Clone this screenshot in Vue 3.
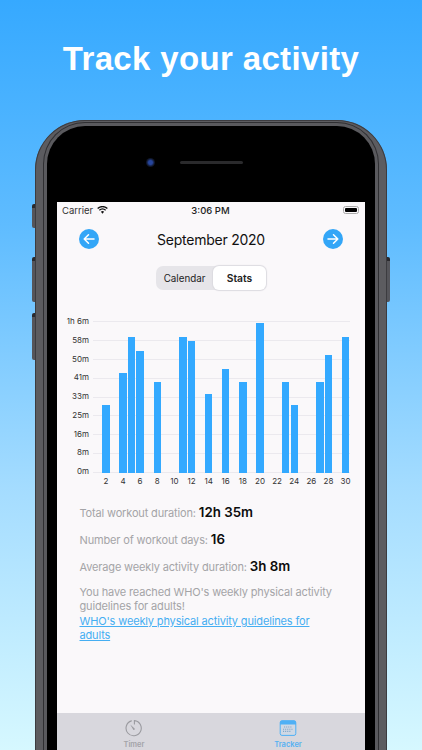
<script setup>
const days = [
  ['', 0], [2, 68], ['', 0], [4, 100], [5, 136, ''], [6, 122], ['', 0], [8, 91], ['', 0], [10, 0],
  [11, 136, ''], [12, 132], ['', 0], [14, 79.5], ['', 0], [16, 104.5], ['', 0], [18, 91], ['', 0], [20, 150],
  ['', 0], [22, 0], [23, 91, ''], [24, 68], ['', 0], [26, 0], [27, 91, ''], [28, 118], ['', 0], [30, 136]
].map(([d, h, hide], i) => ({ id: i, label: hide === '' ? '' : d, h }))
const ticks = ['1h 6m', '58m', '50m', '41m', '33m', '25m', '16m', '8m', '0m']
</script>

<template>
  <div class="page">
    <h1 class="headline">Track your activity</h1>
    <div class="phone">
      <span class="btn mute"></span>
      <span class="btn volup"></span>
      <span class="btn voldown"></span>
      <span class="btn power"></span>
      <div class="bezel">
        <div class="top">
          <span class="camera"></span>
          <span class="speaker"></span>
        </div>
        <div class="screen">
          <div class="status">
            <span class="carrier">Carrier
              <svg class="wifi" viewBox="0 0 16 12" width="11" height="8">
                <path d="M8 11.5 5.6 8.8a3.4 3.4 0 0 1 4.8 0Z" fill="#111"/>
                <path d="M3.9 7.1a6 6 0 0 1 8.2 0l1.3-1.4a8 8 0 0 0-10.8 0Z" fill="#111"/>
                <path d="M1.4 4.4a9.7 9.7 0 0 1 13.2 0L16 3A11.7 11.7 0 0 0 0 3Z" fill="#111"/>
              </svg>
            </span>
            <span class="time">3:06 PM</span>
            <span class="battery-slot"><span class="battery"><i></i></span></span>
          </div>

          <div class="month">
            <span class="round">
              <svg viewBox="0 0 20 20" width="20" height="20"><path d="M15 10H5.5M9.5 5.8 5.2 10l4.3 4.2" fill="none" stroke="#fff" stroke-width="1.5" stroke-linecap="round" stroke-linejoin="round"/></svg>
            </span>
            <span class="month-name">September 2020</span>
            <span class="round">
              <svg viewBox="0 0 20 20" width="20" height="20"><path d="M5 10h9.5M10.5 5.8l4.3 4.2-4.3 4.2" fill="none" stroke="#fff" stroke-width="1.5" stroke-linecap="round" stroke-linejoin="round"/></svg>
            </span>
          </div>

          <div class="segment">
            <span class="seg">Calendar</span>
            <span class="seg active">Stats</span>
          </div>

          <div class="chart">
            <div class="y-axis">
              <span v-for="t in ticks" :key="t">{{ t }}</span>
            </div>
            <div class="plot">
              <div class="grid-lines">
                <i v-for="t in ticks" :key="t"></i>
              </div>
              <div class="bars">
                <div v-for="d in days" :key="d.id" class="slot">
                  <span v-if="d.h" class="bar" :style="{ height: d.h + 'px' }"></span>
                </div>
              </div>
              <div class="x-axis">
                <span v-for="d in days" :key="d.id">{{ d.label }}</span>
              </div>
            </div>
          </div>

          <div class="stats">
            <p class="stat">Total workout duration: <b>12h 35m</b></p>
            <p class="stat">Number of workout days: <b>16</b></p>
            <p class="stat">Average weekly activity duration: <b>3h 8m</b></p>
            <p class="note">You have reached WHO's weekly physical activity guidelines for adults!</p>
            <a class="link">WHO's weekly physical activity guidelines for adults</a>
          </div>

          <div class="tabs">
            <div class="tab">
              <svg viewBox="0 0 18 18" width="18" height="18">
                <path d="M6.4 1.9a7.6 7.6 0 1 0 3-.3V5" fill="none" stroke="#9b9ba0" stroke-width="1.1" stroke-linecap="round"/>
                <path d="M5.2 5.4 9.6 9.6a.9.9 0 0 1-1.3 1.2Z" fill="#9b9ba0"/>
              </svg>
              <span>Timer</span>
            </div>
            <div class="tab on">
              <svg viewBox="0 0 18 18" width="18" height="18">
                <rect x="1.2" y="1.8" width="15.6" height="14.6" rx="1.8" fill="#cfd8e4" stroke="#4fb0f5"/>
                <path d="M1 3.4a2 2 0 0 1 2-2h12a2 2 0 0 1 2 2v2H1Z" fill="#4fb0f5"/>
                <path d="M5 8h8M4 10.2h10M4 12.4h8" stroke="#7fa6c8" stroke-width="1.1" stroke-dasharray="1.1 1"/>
              </svg>
              <span>Tracker</span>
            </div>
          </div>
        </div>
      </div>
    </div>
  </div>
</template>

<style scoped>
.page {
  width: 422px;
  height: 750px;
  overflow: hidden;
  display: flex;
  flex-direction: column;
  align-items: center;
  background: linear-gradient(180deg, #36a9ff 0%, #5fbcff 30%, #a4dcff 65%, #d6f8ff 100%);
  font-family: Inter, "Liberation Sans", sans-serif;
}
.headline {
  margin: 37px 0 0;
  height: 44px;
  line-height: 44px;
  font-family: "Liberation Sans", Arial, sans-serif;
  font-size: 33px;
  font-weight: 700;
  color: #fff;
  letter-spacing: 0.35px;
  white-space: nowrap;
}
.phone {
  position: relative;
  margin-top: 39px;
  width: 352px;
  height: 700px;
  flex: none;
  box-sizing: border-box;
  padding: 6px 12px 0;
  border-radius: 50px 50px 0 0;
  background: #5c5c60;
  box-shadow: inset 0 0 0 1px #3c3c40;
}
.btn {
  position: absolute;
  width: 3px;
  background: #55555a;
  border-top: 4px solid #2a2a2e;
  box-sizing: border-box;
}
.mute { left: -3px; top: 84px; height: 24px; border-radius: 2px 0 0 2px; }
.volup { left: -3px; top: 137px; height: 45px; border-radius: 2px 0 0 2px; }
.voldown { left: -3px; top: 193px; height: 47px; border-radius: 2px 0 0 2px; }
.power { right: -3px; top: 137px; height: 45px; border-radius: 0 2px 2px 0; }
.bezel {
  height: 100%;
  box-sizing: border-box;
  padding: 0 10px;
  background: #000;
  border-radius: 38px 38px 0 0;
  display: flex;
  flex-direction: column;
  box-shadow: 0 0 0 3px #5a5a5e, 0 0 0 4px #2f2f32;
}
.top {
  height: 76px;
  flex: none;
  display: flex;
  align-items: center;
  justify-content: center;
  gap: 25px;
  padding: 0 34px 4px 0;
  box-sizing: border-box;
}
.camera {
  width: 9px;
  height: 9px;
  border-radius: 50%;
  background: radial-gradient(circle, #26459c 0 30%, #10182e 60%, #0a0a10 100%);
}
.speaker {
  width: 63px;
  height: 3px;
  border-radius: 2px;
  background: #2a2a2c;
}
.screen {
  width: 308px;
  height: 548px;
  flex: none;
  background: #faf8fa;
  display: flex;
  flex-direction: column;
}
.status {
  height: 16px;
  padding: 0 6px 0 5px;
  display: grid;
  grid-template-columns: 1fr auto 1fr;
  align-items: center;
  font-size: 9.5px;
  color: #222;
}
.carrier {
  display: flex;
  align-items: center;
  gap: 4px;
  color: #333;
}
.time { font-weight: 500; }
.battery-slot {
  display: flex;
  justify-content: flex-end;
}
.battery {
  width: 16px;
  height: 8px;
  box-sizing: border-box;
  padding: 1px;
  border: 1px solid #aaa;
  border-radius: 2.5px;
}
.battery i {
  display: block;
  height: 100%;
  background: #000;
  border-radius: 1px;
}
.month {
  height: 42px;
  padding: 0 22px;
  display: flex;
  align-items: center;
  justify-content: space-between;
}
.round {
  width: 20px;
  height: 20px;
  border-radius: 50%;
  background: #33a6f7;
  display: flex;
}
.month-name {
  font-size: 14px;
  letter-spacing: -0.25px;
  color: #111;
}
.segment {
  align-self: center;
  margin-top: 6px;
  width: 110px;
  height: 24px;
  box-sizing: border-box;
  background: #e6e5e9;
  border-radius: 7px;
  display: flex;
  font-size: 9.8px;
}
.seg {
  flex: 1;
  display: flex;
  align-items: center;
  justify-content: center;
  color: #222;
}
.seg.active {
  flex: 0 0 53px;
  font-size: 10.3px;
  font-weight: 600;
  background: #fff;
  border-radius: 6px;
  box-shadow: 0 0 1px 1px #dcdbe0;
  color: #222;
}
.chart {
  margin-top: 31px;
  display: flex;
  padding-left: 7px;
}
.y-axis {
  width: 25px;
  height: 163px;
  margin-top: -6px;
  display: flex;
  flex-direction: column;
  justify-content: space-between;
  align-items: flex-end;
  font-size: 8px;
  line-height: 13px;
  color: #333;
}
.plot {
  position: relative;
  margin-left: 4px;
  width: 257px;
}
.grid-lines {
  position: absolute;
  inset: 0 0 auto 0;
  height: 152px;
  display: flex;
  flex-direction: column;
  justify-content: space-between;
}
.grid-lines i {
  display: block;
  height: 1px;
  background: #ebe9ee;
}
.bars {
  position: relative;
  height: 152px;
  display: grid;
  grid-template-columns: repeat(30, 8.57px);
  align-items: end;
}
.slot {
  height: 100%;
  display: flex;
  align-items: flex-end;
  justify-content: center;
}
.bar {
  width: 7.4px;
  flex: none;
  background: #33a9ff;
}
.x-axis {
  display: grid;
  grid-template-columns: repeat(30, 8.57px);
  margin-top: 2px;
  font-size: 8px;
  line-height: 12px;
  color: #333;
}
.x-axis span {
  display: flex;
  justify-content: center;
  white-space: nowrap;
  width: 8.57px;
}
.stats {
  padding: 0 22.5px;
  margin-top: 14.5px;
  flex: 1;
  color: #a4a4a7;
  font-size: 11px;
  letter-spacing: -0.15px;
}
.stat {
  margin: 0 0 6.5px;
  height: 20.5px;
  line-height: 20px;
  white-space: nowrap;
}
.stat b {
  font-size: 13.3px;
  font-weight: 600;
  letter-spacing: 0;
  color: #0c0c0c;
}
.note {
  margin: 9px 0 0;
  line-height: 14px;
}
.link {
  display: block;
  margin-top: 1px;
  line-height: 14px;
  color: #45aef2;
  text-decoration: underline;
}
.tabs {
  height: 37px;
  flex: none;
  background: #d8d7dd;
  display: flex;
}
.tab {
  flex: 1;
  padding-top: 6px;
  box-sizing: border-box;
  display: flex;
  flex-direction: column;
  align-items: center;
  gap: 3px;
  font-size: 7.5px;
  line-height: 9px;
  font-weight: 600;
  color: #a3a3a8;
}
.tab.on { color: #55b1f2; }
</style>
